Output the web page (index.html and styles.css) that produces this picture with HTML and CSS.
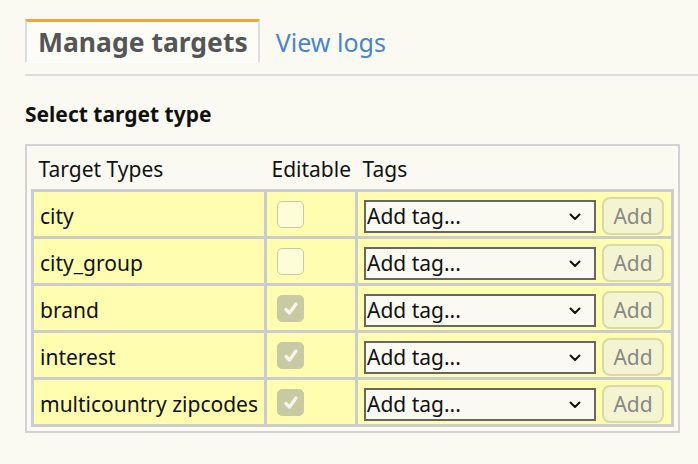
FILE: index.html
```html
<!DOCTYPE html>
<html lang="en">

<head>
    <meta charset="UTF-8">
    <meta name="viewport" content="width=device-width, initial-scale=1.0">
    <title>Targets</title>
    <link rel="stylesheet" href="styles.css">
</head>

<body>

    <nav class="tabs">
        <span class="tab active">Manage targets</span>
        <a class="tab" href="#">View logs</a>
    </nav>

    <h2 class="section-title">Select target type</h2>

    <div class="targets-box">
        <table class="targets">
            <thead>
                <tr>
                    <th class="col-type">Target Types</th>
                    <th class="col-edit">Editable</th>
                    <th class="col-tags">Tags</th>
                </tr>
            </thead>
            <tbody>
                <tr>
                    <td>city</td>
                    <td><span class="check"></span></td>
                    <td>
                        <div class="tag-form">
                            <span class="select-wrap">
                                <select class="tag-select"><option>Add tag...</option></select>
                                <svg class="chevron" width="12" height="8" viewBox="0 0 12 8"><path d="M1.5 1.5 L6 6 L10.5 1.5" fill="none" stroke="#111" stroke-width="2" stroke-linecap="round" stroke-linejoin="round"/></svg>
                            </span>
                            <button class="add-btn" disabled>Add</button>
                        </div>
                    </td>
                </tr>
                <tr>
                    <td>city_group</td>
                    <td><span class="check"></span></td>
                    <td>
                        <div class="tag-form">
                            <span class="select-wrap">
                                <select class="tag-select"><option>Add tag...</option></select>
                                <svg class="chevron" width="12" height="8" viewBox="0 0 12 8"><path d="M1.5 1.5 L6 6 L10.5 1.5" fill="none" stroke="#111" stroke-width="2" stroke-linecap="round" stroke-linejoin="round"/></svg>
                            </span>
                            <button class="add-btn" disabled>Add</button>
                        </div>
                    </td>
                </tr>
                <tr>
                    <td>brand</td>
                    <td><span class="check checked"><svg width="27" height="27" viewBox="0 0 27 27"><path d="M9 14.5 L12.5 18 L19 9" fill="none" stroke="#f6f6ea" stroke-width="3.2" stroke-linecap="round" stroke-linejoin="round"/></svg></span></td>
                    <td>
                        <div class="tag-form">
                            <span class="select-wrap">
                                <select class="tag-select"><option>Add tag...</option></select>
                                <svg class="chevron" width="12" height="8" viewBox="0 0 12 8"><path d="M1.5 1.5 L6 6 L10.5 1.5" fill="none" stroke="#111" stroke-width="2" stroke-linecap="round" stroke-linejoin="round"/></svg>
                            </span>
                            <button class="add-btn" disabled>Add</button>
                        </div>
                    </td>
                </tr>
                <tr>
                    <td>interest</td>
                    <td><span class="check checked"><svg width="27" height="27" viewBox="0 0 27 27"><path d="M9 14.5 L12.5 18 L19 9" fill="none" stroke="#f6f6ea" stroke-width="3.2" stroke-linecap="round" stroke-linejoin="round"/></svg></span></td>
                    <td>
                        <div class="tag-form">
                            <span class="select-wrap">
                                <select class="tag-select"><option>Add tag...</option></select>
                                <svg class="chevron" width="12" height="8" viewBox="0 0 12 8"><path d="M1.5 1.5 L6 6 L10.5 1.5" fill="none" stroke="#111" stroke-width="2" stroke-linecap="round" stroke-linejoin="round"/></svg>
                            </span>
                            <button class="add-btn" disabled>Add</button>
                        </div>
                    </td>
                </tr>
                <tr>
                    <td>multicountry zipcodes</td>
                    <td><span class="check checked"><svg width="27" height="27" viewBox="0 0 27 27"><path d="M9 14.5 L12.5 18 L19 9" fill="none" stroke="#f6f6ea" stroke-width="3.2" stroke-linecap="round" stroke-linejoin="round"/></svg></span></td>
                    <td>
                        <div class="tag-form">
                            <span class="select-wrap">
                                <select class="tag-select"><option>Add tag...</option></select>
                                <svg class="chevron" width="12" height="8" viewBox="0 0 12 8"><path d="M1.5 1.5 L6 6 L10.5 1.5" fill="none" stroke="#111" stroke-width="2" stroke-linecap="round" stroke-linejoin="round"/></svg>
                            </span>
                            <button class="add-btn" disabled>Add</button>
                        </div>
                    </td>
                </tr>
            </tbody>
        </table>
    </div>

</body>

</html>
```

FILE: styles.css
```css
html,
body {
    margin: 0;
    padding: 0;
    background: #fafaf3;
    font-family: "Noto Sans", "Open Sans", sans-serif;
    color: #111;
}

body {
    padding-left: 25px;
}

/* tab strip */
.tabs {
    display: flex;
    align-items: flex-start;
    padding-top: 19px;
    padding-bottom: 11px;
    border-bottom: 2px solid #dddddd;
}

.tab {
    font-size: 25px;
    line-height: 40px;
    padding-top: 3px;
    color: #4a86c6;
    text-decoration: none;
}

.tab.active {
    font-size: 26.5px;
    font-weight: bold;
    color: #555;
    padding: 0 10px 0 11px;
    background: #fdfdf8;
    border: 2px solid #dddddd;
    border-top: 3px solid #f0a73a;
    border-bottom: 1px solid #ffffff;
    margin-right: 16px;
}

.section-title {
    font-size: 21px;
    line-height: 27px;
    margin: 25px 0 16px;
}

/* targets table */
.targets-box {
    width: 643px;
    border: 2px solid #d2d2d2;
    padding: 4px;
}

.targets {
    width: 643px;
    border-collapse: collapse;
    table-layout: fixed;
    font-size: 21px;
}

.targets th {
    font-weight: normal;
    text-align: left;
    padding: 6px 6px 6px;
    line-height: 27px;
}

.col-type { width: 221px; }
.col-edit { width: 79px; }

.targets td {
    background: #fffeb0;
    border: 3px solid #cccccc;
    padding: 5px 6px 1px;
    height: 38px;
    line-height: 27px;
}

.targets td:nth-child(2) {
    padding-left: 10px;
}

.check {
    display: block;
    width: 25px;
    height: 25px;
    border: 1px solid #c9c9a6;
    border-radius: 5px;
    background: #fdfdd8;
    margin-top: -4px;
}

.check.checked {
    border-color: #c9c9a4;
    background: #c9c9a4;
}

.check svg {
    display: block;
    margin: -1px;
}

.tag-form {
    display: flex;
    align-items: center;
    gap: 6px;
}

.select-wrap {
    position: relative;
    display: block;
}

.tag-select {
    appearance: none;
    -webkit-appearance: none;
    width: 232px;
    height: 33px;
    margin: 0;
    border: 2px solid #666;
    border-radius: 0;
    background: #fafaf3;
    font-family: inherit;
    font-size: 21px;
    color: #111;
    padding: 0 0 0 1px;
}

.chevron {
    position: absolute;
    right: 15px;
    top: 13px;
    pointer-events: none;
}

.add-btn {
    width: 62px;
    height: 38px;
    margin: 0;
    border: 2px solid #d9d9ab;
    border-radius: 8px;
    background: #f4f4d2;
    font-family: inherit;
    font-size: 21px;
    color: #888;
    padding: 0;
}
```
